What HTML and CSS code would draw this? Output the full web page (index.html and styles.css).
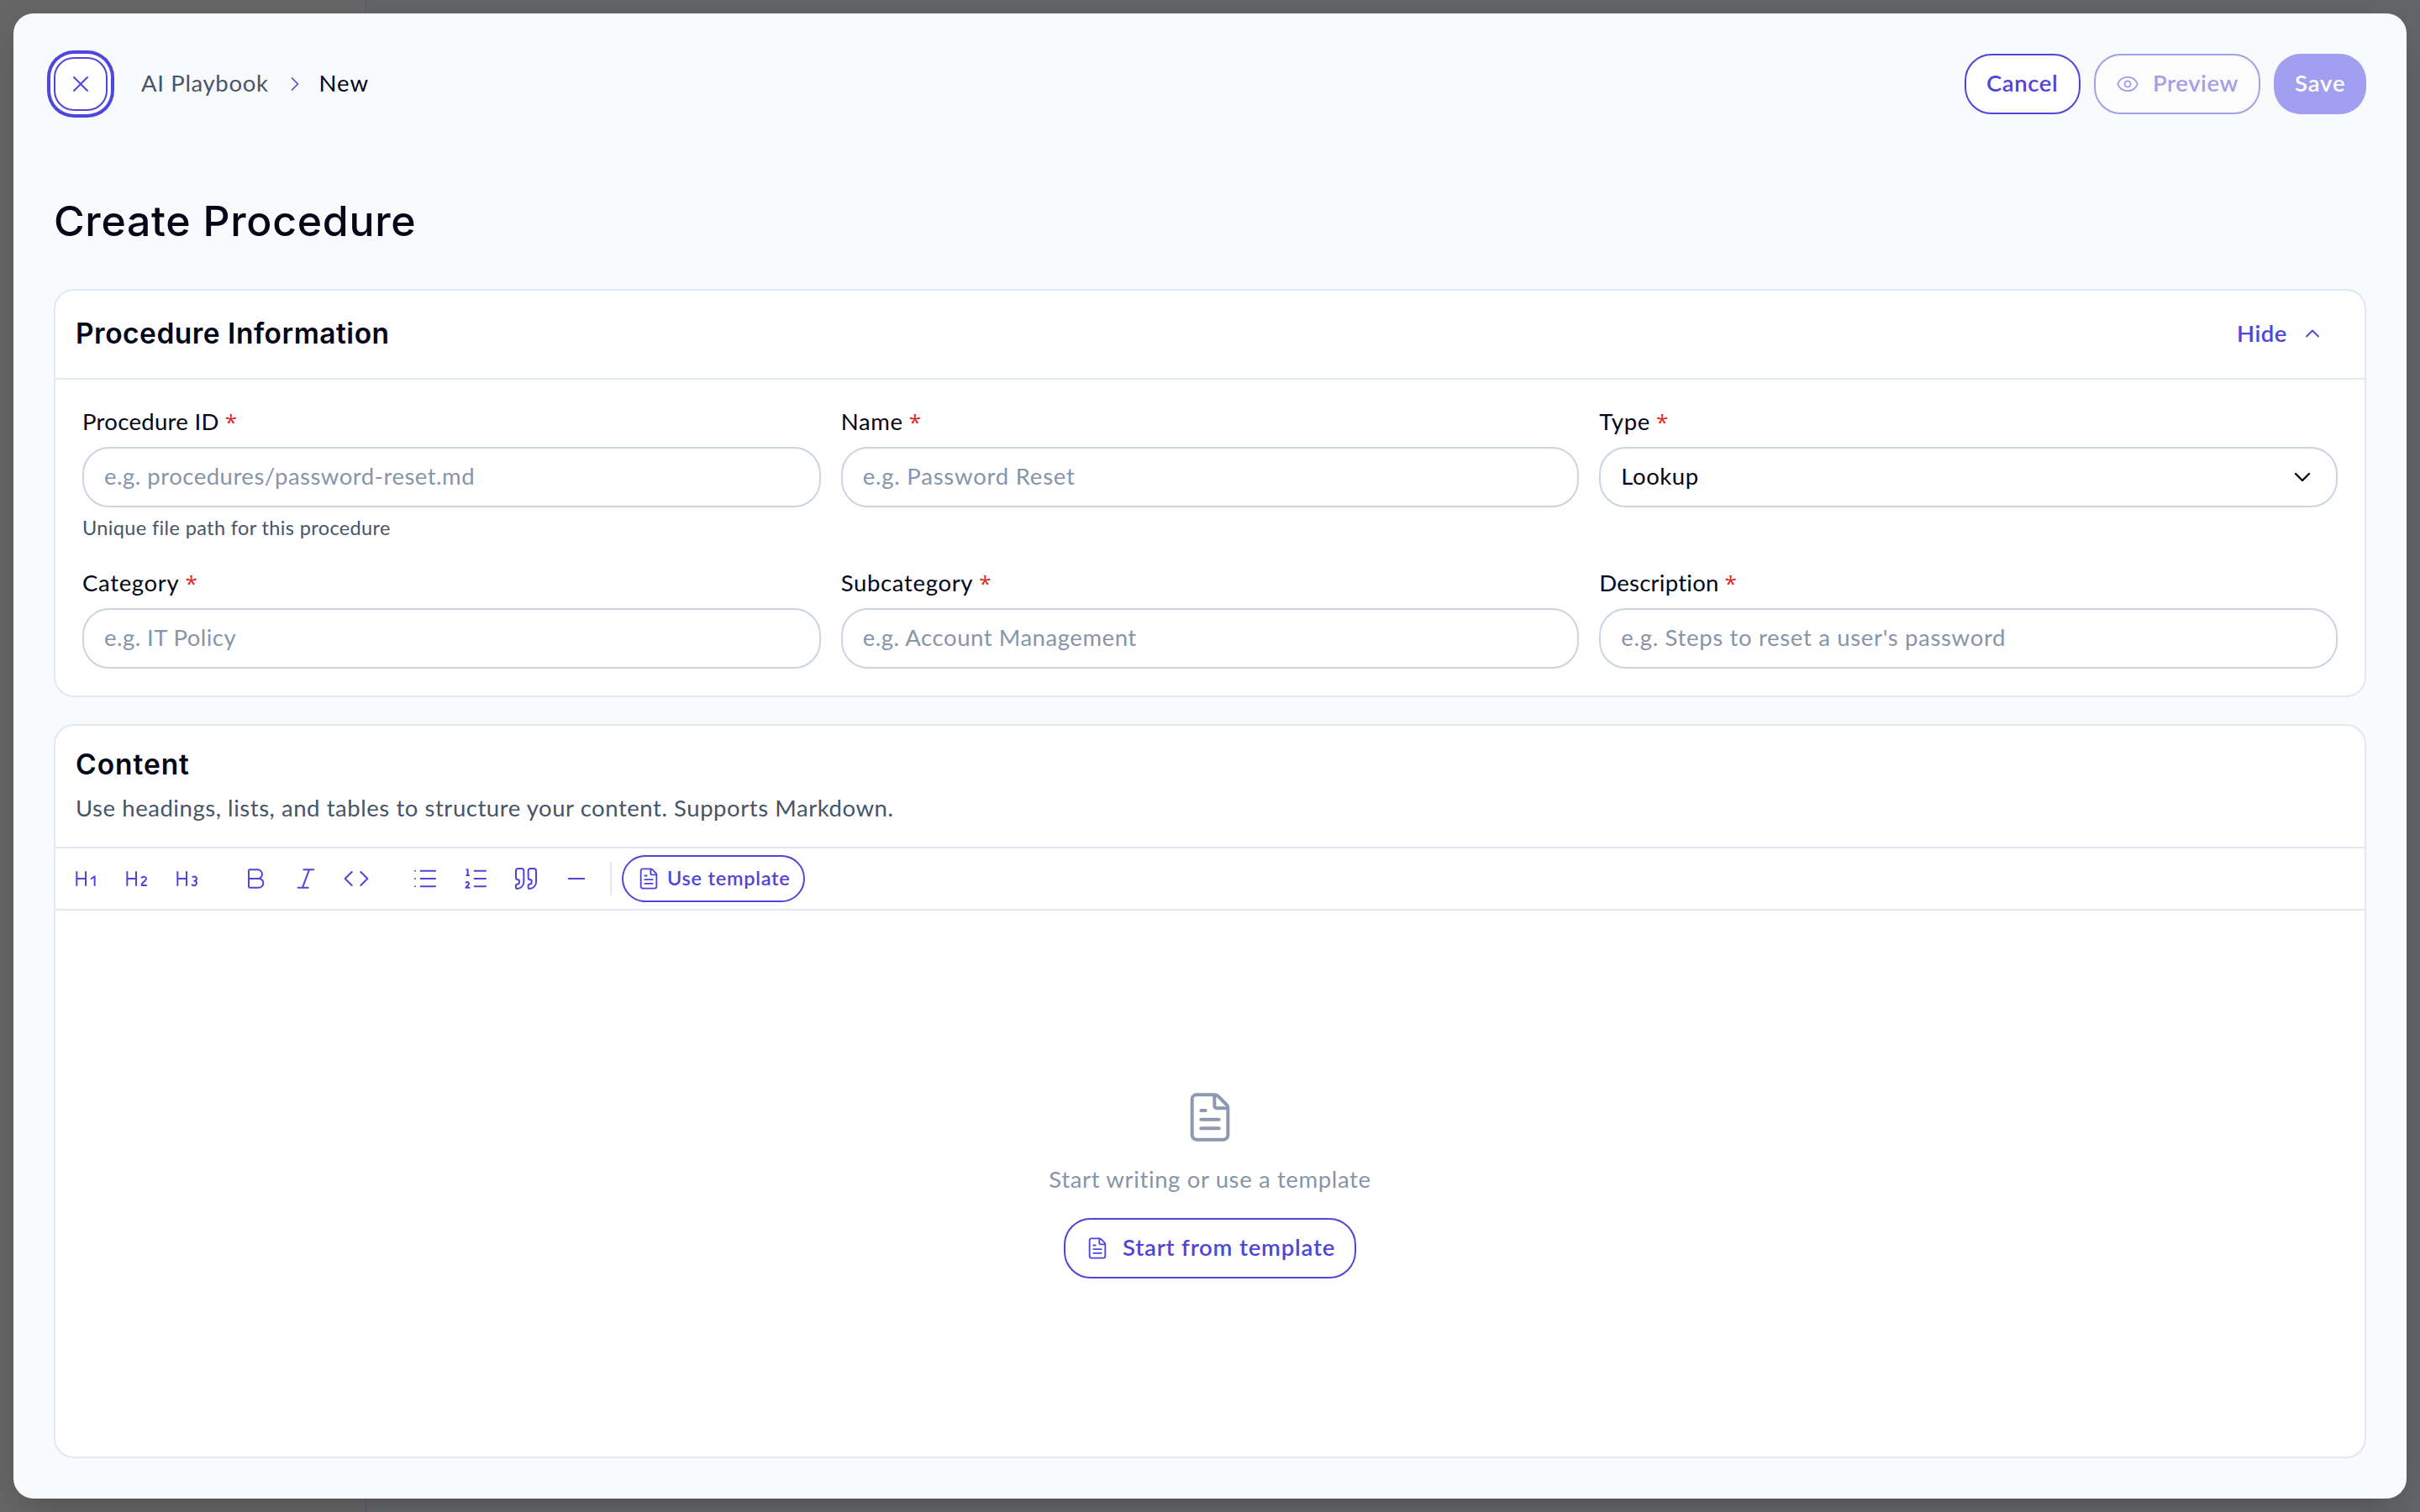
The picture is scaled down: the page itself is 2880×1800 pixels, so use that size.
FILE: index.html
```html
<!DOCTYPE html>
<html lang="en">
<head>
<meta charset="utf-8">
<title>Create Procedure</title>
<link rel="stylesheet" href="styles.css">
</head>
<body>
<svg class="sprite" aria-hidden="true">
  <symbol id="x" viewBox="0 0 24 24"><path d="M18 6 6 18M6 6l12 12"/></symbol>
  <symbol id="right" viewBox="0 0 24 24"><path d="m9 18 6-6-6-6"/></symbol>
  <symbol id="up" viewBox="0 0 24 24"><path d="m18 15-6-6-6 6"/></symbol>
  <symbol id="down" viewBox="0 0 24 24"><path d="m6 9 6 6 6-6"/></symbol>
  <symbol id="eye" viewBox="0 0 24 24"><path d="M2.062 12.348a1 1 0 0 1 0-.696 10.75 10.75 0 0 1 19.876 0 1 1 0 0 1 0 .696 10.75 10.75 0 0 1-19.876 0"/><circle cx="12" cy="12" r="3"/></symbol>
  <symbol id="file" viewBox="0 0 24 24"><path d="M6 22a2 2 0 0 1-2-2V4a2 2 0 0 1 2-2h8a2.4 2.4 0 0 1 1.704.706l3.588 3.588A2.4 2.4 0 0 1 20 8v12a2 2 0 0 1-2 2zM14 2v5a1 1 0 0 0 1 1h5M10 9H8M16 13H8M16 17H8"/></symbol>
  <symbol id="h1" viewBox="0 0 24 24"><path d="M4 12h8M4 18V6M12 18V6m5 6 3-2v8"/></symbol>
  <symbol id="h2" viewBox="0 0 24 24"><path d="M4 12h8M4 18V6M12 18V6M21 18h-4c0-4 4-3 4-6 0-1.5-2-2.5-4-1"/></symbol>
  <symbol id="h3" viewBox="0 0 24 24"><path d="M4 12h8M4 18V6M12 18V6M17.5 10.5c1.7-1 3.5 0 3.5 1.5a2 2 0 0 1-2 2M17 17.5c2 1.5 4 .3 4-1.5a2 2 0 0 0-2-2"/></symbol>
  <symbol id="bold" viewBox="0 0 24 24"><path d="M6 12h9a4 4 0 0 1 0 8H7a1 1 0 0 1-1-1V5a1 1 0 0 1 1-1h7a4 4 0 0 1 0 8"/></symbol>
  <symbol id="italic" viewBox="0 0 24 24"><path d="M19 4h-9M14 20H5M15 4 9 20"/></symbol>
  <symbol id="code" viewBox="0 0 24 24"><path d="m16 18 6-6-6-6M8 6l-6 6 6 6"/></symbol>
  <symbol id="list" viewBox="0 0 24 24"><path d="M3 5h.01M3 12h.01M3 19h.01M8 5h13M8 12h13M8 19h13"/></symbol>
  <symbol id="ordered" viewBox="0 0 24 24"><path d="M11 5h10M11 12h10M11 19h10M4 4h1v5M4 9h2M6.5 20H3.4c0-1 2.6-1.925 2.6-3.5a1.5 1.5 0 0 0-2.6-1.02"/></symbol>
  <symbol id="quote" viewBox="0 0 24 24"><path d="M16 3a2 2 0 0 0-2 2v6a2 2 0 0 0 2 2 1 1 0 0 1 1 1v1a2 2 0 0 1-2 2 1 1 0 0 0-1 1v2a1 1 0 0 0 1 1 6 6 0 0 0 6-6V5a2 2 0 0 0-2-2zM5 3a2 2 0 0 0-2 2v6a2 2 0 0 0 2 2 1 1 0 0 1 1 1v1a2 2 0 0 1-2 2 1 1 0 0 0-1 1v2a1 1 0 0 0 1 1 6 6 0 0 0 6-6V5a2 2 0 0 0-2-2z"/></symbol>
  <symbol id="minus" viewBox="0 0 24 24"><path d="M5 12h14"/></symbol>
</svg>
<main class="modal">
  <header class="topbar">
    <button class="close" aria-label="Close"><svg class="icon"><use href="#x"/></svg></button>
    <nav class="crumbs"><span class="crumb">AI Playbook</span><svg class="icon icon-sm"><use href="#right"/></svg><span class="crumb-current">New</span></nav>
    <div class="actions">
      <button class="btn btn-cancel"><span class="t-cancel">Cancel</span></button>
      <button class="btn btn-preview" disabled><svg class="icon icon-sm"><use href="#eye"/></svg><span class="t-preview">Preview</span></button>
      <button class="btn btn-save" disabled><span class="t-save">Save</span></button>
    </div>
  </header>
  <h1 class="title"><span>Create Procedure</span></h1>
  <section class="card">
    <div class="card-head"><h2 class="heading"><span>Procedure Information</span></h2><button class="hide"><span class="t-hide">Hide</span><svg class="icon icon-sm"><use href="#up"/></svg></button></div>
    <div class="fields">
      <div class="field"><label class="label"><span class="l-id">Procedure ID</span><span class="req">*</span></label><div class="input"><span class="p-id">e.g. procedures/password-reset.md</span></div><p class="hint"><span>Unique file path for this procedure</span></p></div>
      <div class="field"><label class="label"><span class="l-name">Name</span><span class="req">*</span></label><div class="input"><span class="p-name">e.g. Password Reset</span></div></div>
      <div class="field"><label class="label"><span class="l-type">Type</span><span class="req">*</span></label><div class="input select"><span class="p-type">Lookup</span><svg class="icon"><use href="#down"/></svg></div></div>
      <div class="field"><label class="label"><span class="l-cat">Category</span><span class="req">*</span></label><div class="input"><span class="p-cat">e.g. IT Policy</span></div></div>
      <div class="field"><label class="label"><span class="l-sub">Subcategory</span><span class="req">*</span></label><div class="input"><span class="p-sub">e.g. Account Management</span></div></div>
      <div class="field"><label class="label"><span class="l-desc">Description</span><span class="req">*</span></label><div class="input"><span class="p-desc">e.g. Steps to reset a user's password</span></div></div>
    </div>
  </section>
  <section class="card card-content">
    <div class="content-head"><h2 class="heading"><span class="t-content">Content</span></h2><p class="sub"><span>Use headings, lists, and tables to structure your content. Supports Markdown.</span></p></div>
    <div class="toolbar">
      <div class="tools"><button class="tool"><svg class="icon"><use href="#h1"/></svg></button><button class="tool"><svg class="icon"><use href="#h2"/></svg></button><button class="tool"><svg class="icon"><use href="#h3"/></svg></button></div>
      <div class="tools"><button class="tool"><svg class="icon"><use href="#bold"/></svg></button><button class="tool"><svg class="icon"><use href="#italic"/></svg></button><button class="tool"><svg class="icon"><use href="#code"/></svg></button></div>
      <div class="tools"><button class="tool"><svg class="icon"><use href="#list"/></svg></button><button class="tool"><svg class="icon"><use href="#ordered"/></svg></button><button class="tool"><svg class="icon"><use href="#quote"/></svg></button><button class="tool"><svg class="icon"><use href="#minus"/></svg></button></div>
      <i class="rule"></i>
      <button class="btn btn-use"><svg class="icon icon-sm"><use href="#file"/></svg><span class="t-use">Use template</span></button>
    </div>
    <div class="empty">
      <svg class="icon icon-lg"><use href="#file"/></svg>
      <p class="empty-text"><span>Start writing or use a template</span></p>
      <button class="btn btn-start"><svg class="icon icon-sm"><use href="#file"/></svg><span class="t-start">Start from template</span></button>
    </div>
  </section>
</main>
</body>
</html>
```
FILE: styles.css
```css
* { box-sizing: border-box; }
body {
  margin: 0;
  height: 1800px;
  padding: 16px;
  overflow: hidden;
  font-family: Lato, "Open Sans", sans-serif;
  font-size: 27.5px;
  line-height: 40px;
  letter-spacing: .55px;
  color: #020617;
  background: linear-gradient(90deg, #666 434px, #5d5f61 434px, #5d5f61 436px, #646567 436px);
}
h1, h2, p { margin: 0; }
button { font: inherit; letter-spacing: inherit; color: inherit; background: none; border: 0; padding: 0; }
span { white-space: nowrap; }
.sprite { position: absolute; width: 0; height: 0; }
.icon { width: 32px; height: 32px; flex: none; fill: none; stroke: currentColor; stroke-width: 1.5; stroke-linecap: round; stroke-linejoin: round; }
.icon-sm { width: 28px; height: 28px; stroke-width: 1.6; }
.icon-lg { width: 64px; height: 64px; color: #8c99ae; }

.modal {
  display: flex;
  flex-direction: column;
  height: 1768px;
  padding: 48px;
  border-radius: 24px;
  background: #f9fafc;
  box-shadow: 0 16px 50px -12px rgba(0, 0, 0, .25);
}
.topbar { display: flex; align-items: center; height: 72px; }
.close {
  display: grid;
  place-items: center;
  width: 64px;
  height: 64px;
  border: 2px solid #4f46d8;
  border-radius: 24px;
  background: #fff;
  color: #4f46d8;
  box-shadow: 0 0 0 4px #fff, 0 0 0 8px #4f46e0;
}
.crumbs { display: flex; align-items: center; padding-left: 40px; }
.crumbs > span, .btn > span, .input > span { padding-bottom: 3px; }
.hide > span { padding-bottom: 1px; }
.crumbs .icon { margin: 0 15px 0 17px; color: #4f46e0; stroke-width: 1.5; }
.crumb { color: #475569; letter-spacing: .65px; }
.crumb-current { letter-spacing: 1px; }
.actions { display: flex; gap: 16px; margin-left: auto; }
.btn {
  display: flex;
  align-items: center;
  height: 72px;
  border: 2px solid #4f46d8;
  border-radius: 32px;
  background: #fff;
  color: #4f46d8;
  font-weight: 600;
}
.btn-cancel { width: 138px; padding-left: 24px; letter-spacing: .6px; }
.btn-preview { width: 198px; padding-left: 24px; gap: 16px; opacity: .5; letter-spacing: .55px; }
.btn-save { width: 110px; padding-left: 23px; border-color: transparent; background: #a29ff0 border-box; color: #fff; letter-spacing: .9px; }

.title { height: 208px; padding-top: 101px; font: 500 50px/52px Inter, sans-serif; letter-spacing: .7px; }
.heading { font: 600 33.5px/40px Inter, sans-serif; letter-spacing: .5px; }
.t-content { letter-spacing: .95px; }

.card { border: 2px solid #e2e8f0; border-radius: 24px; background: #fff; }
.card-head { display: flex; align-items: center; justify-content: space-between; height: 106px; padding: 0 48px 2px 24px; border-bottom: 2px solid #e2e8f0; }
.hide { display: flex; align-items: center; gap: 16px; color: #4f46d8; font-weight: 600; }
.fields { display: grid; grid-template-columns: repeat(3, 1fr); column-gap: 24px; padding: 30px 32px 32px; }
.field { height: 192px; }
.field:nth-child(n + 4) { height: 122px; }
.label { display: flex; gap: 7px; height: 50px; }
.req { color: #dc2626; font-family: "Open Sans", sans-serif; font-size: 26px; letter-spacing: 0; }
.input { display: flex; align-items: center; justify-content: space-between; height: 72px; padding: 0 24px; border: 2px solid #cbd5e1; border-radius: 32px; color: #8795ab; }
.select { color: #020617; }
.select .icon { stroke-width: 1.8; }
.l-id { letter-spacing: .3px; }
.l-name, .l-type, .l-cat, .l-sub { letter-spacing: .67px; }
.l-desc { letter-spacing: .25px; }
.p-id { letter-spacing: .5px; }
.p-name { letter-spacing: .77px; }
.p-cat { letter-spacing: .45px; }
.p-desc { letter-spacing: .67px; }
.hint { height: 48px; padding-top: 4px; font-size: 23.5px; letter-spacing: .37px; color: #475569; }

.card-content { display: flex; flex-direction: column; flex: 1; margin-top: 32px; }
.content-head { height: 146px; padding: 26px 24px 0; border-bottom: 2px solid #e2e8f0; }
.sub { padding-top: 12px; color: #475569; }
.toolbar { display: flex; align-items: center; height: 74px; padding-left: 8px; border-bottom: 2px solid #e2e8f0; color: #4f46d8; }
.tools { display: flex; gap: 4px; margin-right: 26px; }
.tools:nth-child(3) { margin-right: 12px; }
.tool { display: grid; place-items: center; width: 56px; height: 56px; }
.rule { width: 2px; height: 40px; margin-right: 12px; background: #e2e8f0; }
.btn-use { width: 218px; height: 56px; padding-left: 16px; gap: 8px; font-size: 23.5px; letter-spacing: .75px; }
.empty { display: flex; flex: 1; flex-direction: column; align-items: center; padding-top: 214px; }
.empty-text { padding-top: 22px; margin-bottom: 26px; color: #8795ab; letter-spacing: .63px; }
.btn-start { width: 348px; padding-left: 24px; gap: 16px; letter-spacing: .8px; }
```
